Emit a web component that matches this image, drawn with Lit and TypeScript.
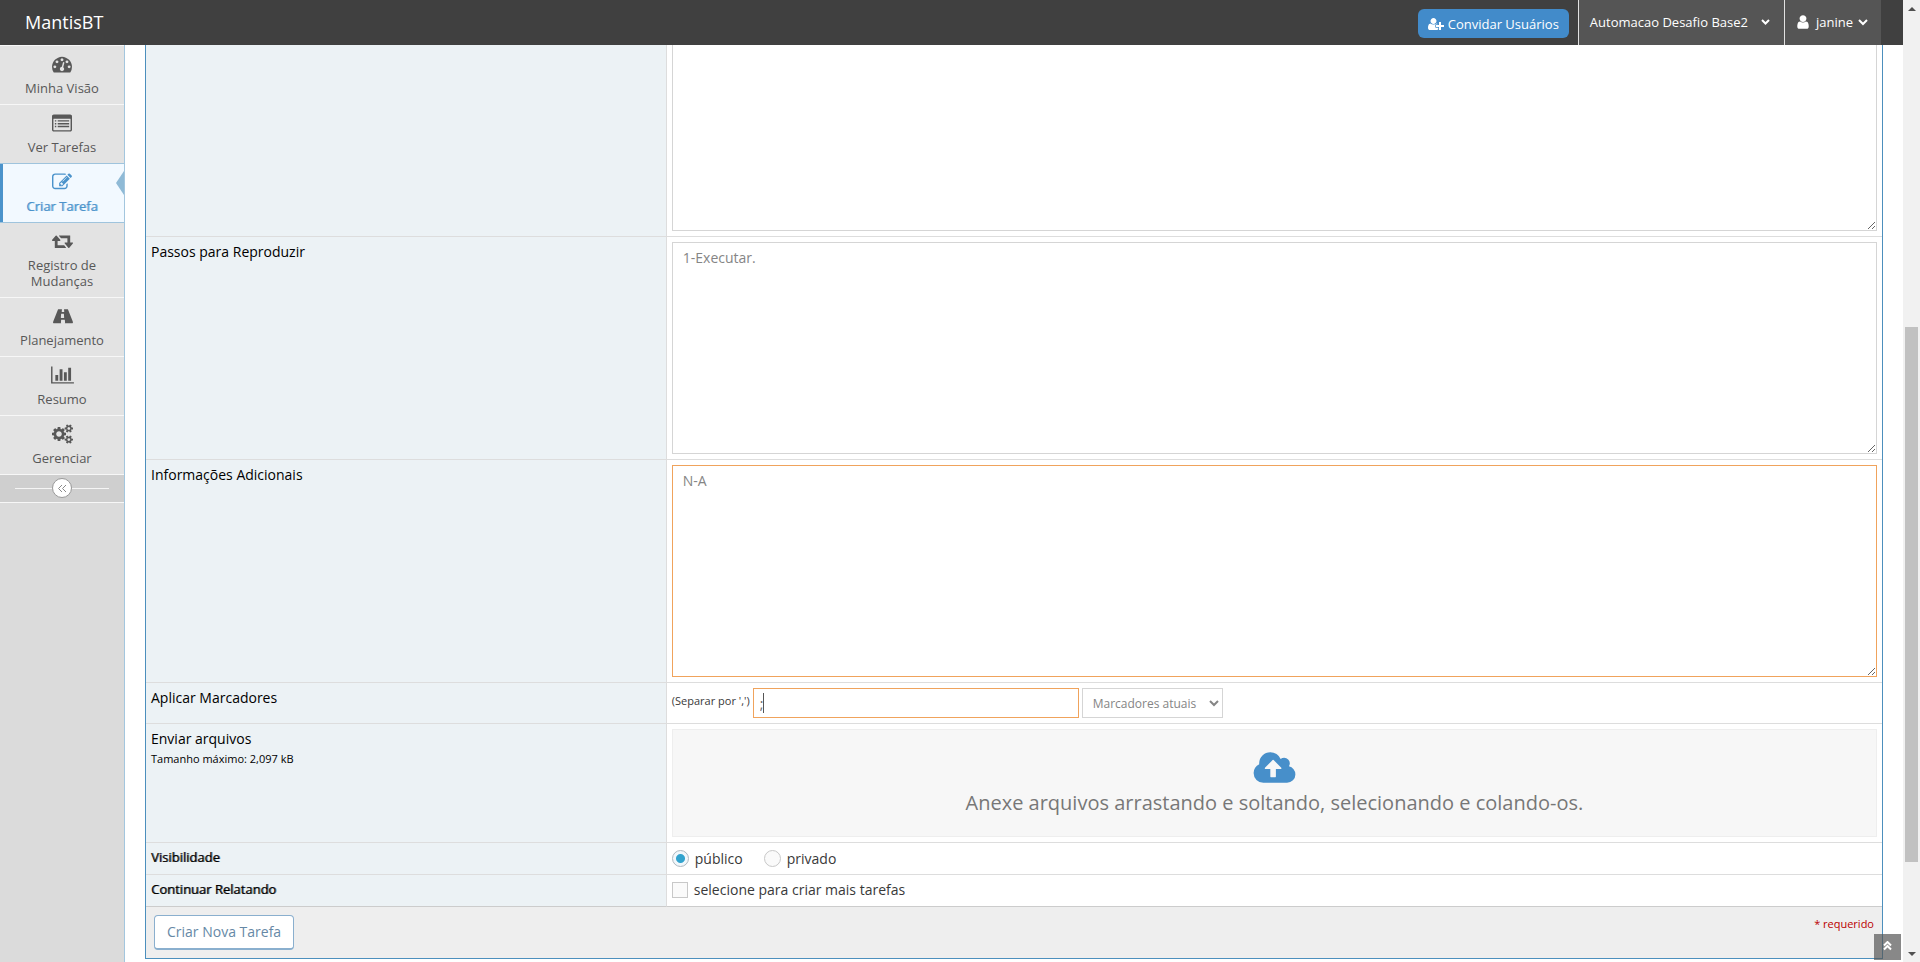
import { LitElement, html, css, svg, nothing } from "lit";
import { customElement, property } from "lit/decorators.js";

interface Glyph {
  width: number;
  path: string;
}

const cog =
  "v140q0 16-149 31-12 27-30 52 51 113 51 138 0 4-4 7-122 71-124 71-8 0-46-47t-52-68q-20 2-30 2t-30-2q-14 21-52 68t-46 47q-2 0-124-71-4-3-4-7 0-25 51-138-18-25-30-52-149-15-149-31v-140q0-16 149-31 13-29 30-52-51-113-51-138 0-4 4-7 4-2 35-20t59-34 30-16q8 0 46 46.5t52 67.5q20-2 30-2t30 2q51-71 92-112l6-2q4 0 124 70 4 3 4 7 0 25-51 138 17 23 30 52 149 15 149 31z";

const glyphs: Record<string, Glyph> = {
  dashboard: {
    width: 1792,
    path: "M384 1152q0-53-37.5-90.5t-90.5-37.5-90.5 37.5-37.5 90.5 37.5 90.5 90.5 37.5 90.5-37.5 37.5-90.5zm192-448q0-53-37.5-90.5t-90.5-37.5-90.5 37.5-37.5 90.5 37.5 90.5 90.5 37.5 90.5-37.5 37.5-90.5zm428 481l101-382q6-26-7.5-48.5t-38.5-29.5-48 6.5-30 39.5l-101 382q-60 5-107 43.5t-63 98.5q-20 77 20 146t117 89 146-20 89-117q16-60-6-117t-72-91zm660-33q0-53-37.5-90.5t-90.5-37.5-90.5 37.5-37.5 90.5 37.5 90.5 90.5 37.5 90.5-37.5 37.5-90.5zm-640-640q0-53-37.5-90.5t-90.5-37.5-90.5 37.5-37.5 90.5 37.5 90.5 90.5 37.5 90.5-37.5 37.5-90.5zm448 192q0-53-37.5-90.5t-90.5-37.5-90.5 37.5-37.5 90.5 37.5 90.5 90.5 37.5 90.5-37.5 37.5-90.5zm320 448q0 261-141 483-19 29-54 29h-1402q-35 0-54-29-141-221-141-483 0-182 71-348t191-286 286-191 348-71 348 71 286 191 191 286 71 348z",
  },
  list: {
    width: 1792,
    path: "M160 128h1472q66 0 113 47t47 113v1216q0 66-47 113t-113 47h-1472q-66 0-113-47t-47-113v-1216q0-66 47-113t113-47zm0 384q-32 0-32 32v960q0 32 32 32h1472q32 0 32-32v-960q0-32-32-32zM256 640h128v128h-128zM256 896h128v128h-128zM256 1152h128v128h-128zM512 640h1024v128h-1024zM512 896h1024v128h-1024zM512 1152h1024v128h-1024z",
  },
  edit: {
    width: 1792,
    path: "M888 1184l116-116-152-152-116 116v56h96v96h56zm440-720q-16-16-33 1l-350 350q-17 17-1 33t33-1l350-350q17-17 1-33zm80 594v190q0 119-84.5 203.5t-203.5 84.5h-832q-119 0-203.5-84.5t-84.5-203.5v-832q0-119 84.5-203.5t203.5-84.5h832q63 0 117 25 15 7 18 23 3 17-9 29l-49 49q-14 14-32 8-23-6-45-6h-832q-66 0-113 47t-47 113v832q0 66 47 113t113 47h832q66 0 113-47t47-113v-126q0-13 9-22l64-64q15-15 35-7t20 29zm-96-738l288 288-672 672h-288v-288zm444 132l-92 92-288-288 92-92q28-28 68-28t68 28l152 152q28 28 28 68t-28 68z",
  },
  retweet: {
    width: 1920,
    path: "M1280 1504q0 13-9.5 22.5t-22.5 9.5h-960q-8 0-13.5-2t-9-7-5.5-8-3-11.5-1-11.5v-600h-192q-26 0-45-19t-19-45q0-24 15-41l320-384q19-22 49-22t49 22l320 384q15 17 15 41 0 26-19 45t-45 19h-192v384h576q16 0 25 11l160 192q7 10 7 21zm640-416q0 24-15 41l-320 384q-20 23-49 23t-49-23l-320-384q-15-17-15-41 0-26 19-45t45-19h192v-384h-576q-16 0-25-12l-160-192q-7-9-7-20 0-13 9.5-22.5t22.5-9.5h960q8 0 13.5 2t9 7 5.5 8 3 11.5 1 11.5v600h192q26 0 45 19t19 45z",
  },
  road: {
    width: 1920,
    path: "M1111 1047v-4l-24-320q-1-13-11-22.5t-23-9.5h-186q-13 0-23 9.5t-11 22.5l-24 320v4q-1 12 8 20t21 8h244q12 0 21-8t8-20zm804 434q0 73-46 73h-704q13 0 22-9.5t8-22.5l-20-256q-1-13-11-22.5t-23-9.5h-272q-13 0-23 9.5t-11 22.5l-20 256q-1 13 8 22.5t22 9.5h-704q-46 0-46-73 0-54 26-116l417-1044q8-19 26-33t38-14h339q-13 0-23 9.5t-11 22.5l-15 192q-1 14 8 23t22 9h166q13 0 22-9t8-23l-15-192q-1-13-11-22.5t-23-9.5h339q20 0 38 14t26 33l417 1044q26 62 26 116z",
  },
  chart: {
    width: 2048,
    path: "M640 896v512h-256v-512h256zm384-512v1024h-256v-1024h256zm1024 1152v128h-2048v-1536h128v1408h1920zm-640-896v768h-256v-768h256zm384-384v1152h-256v-1152h256z",
  },
  cogs: {
    width: 1920,
    path:
      "M896 896q0-106-75-181t-181-75-181 75-75 181 75 181 181 75 181-75 75-181zm768 512q0-52-38-90t-90-38-90 38-38 90q0 53 37.5 90.5t90.5 37.5 90.5-37.5 37.5-90.5zm0-1024q0-52-38-90t-90-38-90 38-38 90q0 53 37.5 90.5t90.5 37.5 90.5-37.5 37.5-90.5zm-384 421v185q0 10-7 19.5t-16 10.5l-155 24q-11 35-32 76 34 48 90 115 7 11 7 20 0 12-7 19-23 30-82.5 89.5t-78.5 59.5q-11 0-21-7l-115-90q-37 19-77 31-11 108-23 155-7 24-30 24h-186q-11 0-20-7.5t-10-17.5l-23-153q-34-10-75-31l-118 89q-7 7-20 7-11 0-21-8-144-133-144-160 0-9 7-19 10-14 41-53t47-61q-23-44-35-82l-152-24q-10-1-17-9.5t-7-19.5v-185q0-10 7-19.5t16-10.5l155-24q11-35 32-76-34-48-90-115-7-11-7-20 0-12 7-20 22-30 82-89t79-59q11 0 21 7l115 90q34-18 77-32 11-108 23-154 7-24 30-24h186q11 0 20 7.5t10 17.5l23 153q34 10 75 31l118-89q8-7 20-7 11 0 21 8 144 133 144 160 0 8-7 19-12 16-42 54t-45 60q23 48 34 82l152 23q10 2 17 10.5t7 19.5zm640 533" +
      cog +
      "m0-1024" +
      cog,
  },
  user: {
    width: 1792,
    path: "M1536 1399q0 109-62.5 187t-150.5 78h-854q-88 0-150.5-78t-62.5-187q0-85 8.5-160.5t31.5-152 58.5-131 94-89 134.5-34.5q131 128 313 128t313-128q76 0 134.5 34.5t94 89 58.5 131 31.5 152 8.5 160.5zm-256-887q0 159-112.5 271.5t-271.5 112.5-271.5-112.5-112.5-271.5 112.5-271.5 271.5-112.5 271.5 112.5 112.5 271.5z",
  },
  userPlus: {
    width: 2048,
    path: "M704 896q-159 0-271.5-112.5t-112.5-271.5 112.5-271.5 271.5-112.5 271.5 112.5 112.5 271.5-112.5 271.5-271.5 112.5zm960 128h352q13 0 22.5 9.5t9.5 22.5v192q0 13-9.5 22.5t-22.5 9.5h-352v352q0 13-9.5 22.5t-22.5 9.5h-192q-13 0-22.5-9.5t-9.5-22.5v-352h-352q-13 0-22.5-9.5t-9.5-22.5v-192q0-13 9.5-22.5t22.5-9.5h352v-352q0-13 9.5-22.5t22.5-9.5h192q13 0 22.5 9.5t9.5 22.5v352zm-736 224q0 52 38 90t90 38h256v238q-68 50-171 50h-874q-121 0-194-69t-73-190q0-53 3.5-103.5t14-109 26.5-108.5 43-97.5 62-81 85.5-53.5 111.5-20q19 0 39 17 79 61 154.5 91.5t164.5 30.5 164.5-30.5 154.5-91.5q20-17 39-17 132 0 217 96h-223q-52 0-90 38t-38 90v192z",
  },
  cloud: {
    width: 2048,
    path: "M1344 928q0-14-9-23l-352-352q-9-9-23-9t-23 9l-351 351q-10 12-10 24 0 14 9 23t23 9h224v352q0 13 9.5 22.5t22.5 9.5h192q13 0 22.5-9.5t9.5-22.5v-352h224q13 0 22.5-9.5t9.5-22.5zm640 288q0 159-112.5 271.5t-271.5 112.5h-1088q-185 0-316.5-131.5t-131.5-316.5q0-130 70-240t188-165q-2-30-2-43 0-212 150-362t362-150q156 0 285.5 87t188.5 231q71-62 166-62 106 0 181 75t75 181q0 76-41 138 130 31 213.5 135.5t83.5 238.5z",
  },
};

const icon = (name: string, size: number) => {
  const g = glyphs[name];
  return html`<svg
    aria-hidden="true"
    height=${size}
    width=${Math.round((g.width * size) / 1792)}
    viewBox="0 0 ${g.width} 1792"
  >
    ${svg`<path fill="currentColor" fill-rule=${name === "list" ? "evenodd" : "nonzero"} d=${g.path} />`}
  </svg>`;
};

const strokes = (d: string, width: number, height: number, weight = 2) => html`<svg
  aria-hidden="true"
  width=${width}
  height=${height}
  viewBox="0 0 ${width} ${height}"
>
  <path d=${d} fill="none" stroke="currentColor" stroke-width=${weight} />
</svg>`;

@customElement("app-topbar")
export class AppTopbar extends LitElement {
  static styles = css`
    :host {
      display: block;
      background: #404040;
      color: #fff;
      font-size: 13px;
    }
    .bar {
      display: flex;
      height: 45px;
    }
    .brand {
      padding-left: 25px;
      margin-right: auto;
      color: #fff;
      text-decoration: none;
      font-size: 18px;
      line-height: 45px;
    }
    .invite {
      display: flex;
      align-items: center;
      gap: 4px;
      height: 29px;
      margin: 9px 9px 0 0;
      padding: 0 10px;
      border-radius: 6px;
      background: #428bca;
      color: #fff;
      text-decoration: none;
    }
    .menu {
      display: flex;
      align-items: center;
      box-sizing: border-box;
      border: 0;
      border-left: 1px solid #e1e1e1;
      background: #555;
      color: #fff;
      font: inherit;
    }
    .project {
      gap: 13px;
      padding: 0 14px 2px 11px;
    }
    .account {
      gap: 5px;
      padding: 0 13px 2px 10px;
      margin-right: 22px;
    }
  `;

  render() {
    return html`<nav class="bar">
      <a class="brand" href="#">MantisBT</a>
      <a class="invite" href="#">${icon("userPlus", 14)}<span>Convidar Usuários</span></a>
      <button class="menu project" type="button">
        <span>Automacao Desafio Base2</span>${strokes("M1 2l3.500 3.500 3.500-3.500", 9, 7)}
      </button>
      <button class="menu account" type="button">
        ${icon("user", 16)}<span>janine</span>${strokes("M1 2l4 4 4-4", 10, 8)}
      </button>
    </nav>`;
  }
}

const sections = [
  { icon: "dashboard", label: "Minha Visão" },
  { icon: "list", label: "Ver Tarefas" },
  { icon: "edit", label: "Criar Tarefa" },
  { icon: "retweet", label: "Registro de Mudanças" },
  { icon: "road", label: "Planejamento" },
  { icon: "chart", label: "Resumo" },
  { icon: "cogs", label: "Gerenciar" },
];

@customElement("app-sidebar")
export class AppSidebar extends LitElement {
  @property() current = "";

  static styles = css`
    :host {
      display: block;
      box-sizing: border-box;
      border-right: 1px solid #a3c6de;
      background: #dbdbdb;
      color: #585858;
      font-size: 13px;
      line-height: 16px;
    }
    .items {
      margin: 0;
      padding: 0;
      list-style: none;
    }
    .link {
      position: relative;
      display: flex;
      flex-direction: column;
      align-items: center;
      gap: 3px;
      padding: 5px 20px 8px;
      border-top: 1px solid #f7f7f7;
      background: #e3e3e3;
      color: inherit;
      text-align: center;
      text-decoration: none;
    }
    .glyph {
      display: flex;
      align-items: center;
      height: 26px;
    }
    .current {
      border-top-color: #9fc4dd;
      background: #f2f9ff;
      color: #4b93cb;
      box-shadow: inset 3px 0 #4b93cb;
    }
    .current .text {
      text-shadow: 1px 0 rgba(75, 147, 203, 0.6);
    }
    .current::after {
      content: "";
      position: absolute;
      right: 0;
      top: 7px;
      border: solid transparent;
      border-width: 12px 8px 12px 0;
      border-right-color: #8fbad6;
    }
    .after {
      border-top-color: #9fc4dd;
    }
    .toggle {
      display: flex;
      align-items: center;
      width: 100%;
      height: 29px;
      padding: 0 15px 1px;
      border: solid #f7f7f7;
      border-width: 1px 0;
      background: #cfcfcf;
      color: #8a8a8a;
    }
    .rule {
      flex: 1;
      height: 1px;
      background: #f5f5f5;
    }
    .knob {
      display: grid;
      place-items: center;
      width: 18px;
      height: 18px;
      border: 1px solid #999;
      border-radius: 50%;
      background: #fff;
    }
  `;

  render() {
    const active = sections.findIndex((s) => s.label === this.current);
    return html`<nav>
        <ul class="items">
          ${sections.map(
            (s, i) => html`<li>
              <a
                class="link ${i === active ? "current" : i === active + 1 ? "after" : ""}"
                href="#"
                aria-current=${i === active ? "page" : nothing}
              >
                <span class="glyph">${icon(s.icon, 20)}</span>
                <span class="text">${s.label}</span>
              </a>
            </li>`,
          )}
        </ul>
      </nav>
      <button class="toggle" type="button" aria-label="Recolher menu">
        <span class="rule"></span>
        <span class="knob">${strokes("M5 1l-3.500 3.500 3.500 3.500M9 1l-3.500 3.500 3.500 3.500", 10, 9, 1)}</span>
        <span class="rule"></span>
      </button>`;
  }
}

@customElement("report-form")
export class ReportForm extends LitElement {
  static styles = css`
    :host {
      display: block;
      border: solid #4c8fbd;
      border-width: 0 1px 1px;
      color: #393939;
      font-size: 14px;
      line-height: 20px;
    }
    .fields {
      width: 100%;
      table-layout: fixed;
      border-spacing: 0;
    }
    .labels {
      width: 30%;
    }
    th,
    td {
      padding: 5px;
      border-bottom: 1px solid #ddd;
      vertical-align: top;
    }
    th {
      border-right: 1px solid #ddd;
      background: #ecf2f5;
      color: #000;
      font-weight: 400;
      text-align: left;
    }
    .top th,
    .top td {
      padding-top: 0;
    }
    .last th,
    .last td {
      border-bottom-color: #ccc;
    }
    .strong {
      font-size: 13px;
      line-height: 18px;
      text-shadow: 1px 0 rgba(0, 0, 0, 0.6);
    }
    .hint {
      display: block;
      font-size: 11px;
    }
    .area,
    .text,
    .select {
      box-sizing: border-box;
      border: 1px solid #d5d5d5;
      border-radius: 0;
      background: #fff;
      color: #858585;
      font: inherit;
      outline: 0;
    }
    .area {
      display: block;
      width: 100%;
      height: 212px;
      padding: 5px 10px;
      resize: vertical;
    }
    .cut {
      height: 186px;
      border-top: 0;
    }
    .edited {
      border-color: #f0a35c;
    }
    .tags {
      display: flex;
      gap: 3px;
    }
    .separator {
      padding-top: 3px;
      font-size: 11px;
      line-height: 20px;
    }
    .entry {
      position: relative;
      width: 326px;
    }
    .text {
      width: 100%;
      height: 30px;
      padding: 4px 6px;
      color: #696969;
    }
    .caret {
      position: absolute;
      left: 10px;
      top: 5px;
      width: 1px;
      height: 20px;
      background: #555;
    }
    .select {
      width: 141px;
      height: 30px;
      padding: 3px 6px;
      font-size: 12px;
    }
    .drop {
      display: flex;
      flex-direction: column;
      align-items: center;
      box-sizing: border-box;
      height: 108px;
      padding-top: 18px;
      border: 1px solid #eee;
      background: #f7f7f7;
      color: #777;
      font-size: 20px;
      line-height: 30px;
    }
    .cloud {
      height: 40px;
      color: #478fca;
    }
    .choices {
      display: flex;
      gap: 21px;
    }
    .choice {
      display: flex;
      align-items: center;
      gap: 6px;
      height: 21px;
    }
    .single {
      height: 20px;
      margin-bottom: 1px;
    }
    .radio,
    .check {
      appearance: none;
      box-sizing: border-box;
      flex: none;
      margin: 0;
      border: 1px solid #c8c8c8;
      background: #fafafa;
    }
    .radio {
      width: 17px;
      height: 17px;
      border-radius: 50%;
    }
    .radio:checked {
      border-color: #adb8c0;
      background: radial-gradient(circle, #32a3ce 4px, #f1f7fb 5px);
    }
    .check {
      width: 16px;
      height: 16px;
    }
    .footer {
      display: flex;
      justify-content: space-between;
      align-items: flex-start;
      padding: 8px;
      background: #eee;
    }
    .submit {
      height: 35px;
      padding: 0 12px;
      border: 1px solid #8aafce;
      border-bottom-width: 2px;
      border-radius: 4px;
      background: #fff;
      color: #6688a6;
      font: inherit;
    }
    .required {
      color: #b00;
      font-size: 11px;
      line-height: 18px;
    }
  `;

  render() {
    return html`<form @submit=${(e: Event) => e.preventDefault()}>
      <table class="fields">
        <colgroup>
          <col class="labels" />
          <col />
        </colgroup>
        <tbody>
          <tr class="top">
            <th scope="row"></th>
            <td><textarea class="area cut" aria-label="Descrição"></textarea></td>
          </tr>
          <tr>
            <th scope="row"><label for="steps">Passos para Reproduzir</label></th>
            <td><textarea class="area" id="steps" .value=${"1-Executar."}></textarea></td>
          </tr>
          <tr>
            <th scope="row"><label for="info">Informações Adicionais</label></th>
            <td><textarea class="area edited" id="info" .value=${"N-A"}></textarea></td>
          </tr>
          <tr>
            <th scope="row"><label for="tag">Aplicar Marcadores</label></th>
            <td>
              <div class="tags">
                <span class="separator">(Separar por ',')</span>
                <span class="entry">
                  <input class="text edited" id="tag" type="text" .value=${";"} />
                  <span class="caret"></span>
                </span>
                <select class="select" aria-label="Marcadores atuais">
                  <option>Marcadores atuais</option>
                </select>
              </div>
            </td>
          </tr>
          <tr>
            <th scope="row">Enviar arquivos<span class="hint">Tamanho máximo: 2,097 kB</span></th>
            <td>
              <div class="drop">
                <span class="cloud">${icon("cloud", 39)}</span>
                <span>Anexe arquivos arrastando e soltando, selecionando e colando-os.</span>
              </div>
            </td>
          </tr>
          <tr>
            <th scope="row" class="strong">Visibilidade</th>
            <td>
              <div class="choices">
                <label class="choice"><input class="radio" type="radio" name="view" checked />público</label>
                <label class="choice"><input class="radio" type="radio" name="view" />privado</label>
              </div>
            </td>
          </tr>
          <tr class="last">
            <th scope="row" class="strong"><label for="more">Continuar Relatando</label></th>
            <td>
              <label class="choice single"
                ><input class="check" id="more" type="checkbox" />selecione para criar mais tarefas</label
              >
            </td>
          </tr>
        </tbody>
      </table>
      <div class="footer">
        <button class="submit" type="submit">Criar Nova Tarefa</button>
        <span class="required">* requerido</span>
      </div>
    </form>`;
  }
}

@customElement("app-root")
export class AppRoot extends LitElement {
  static styles = css`
    :host {
      display: grid;
      grid-template-columns: minmax(0, 1fr) 17px;
      height: 100vh;
      overflow: hidden;
      background: #fff;
      font-family: "Open Sans", sans-serif;
    }
    .page {
      position: relative;
      display: flex;
      flex-direction: column;
      min-height: 0;
    }
    .body {
      display: grid;
      grid-template-columns: 125px minmax(0, 1fr);
      flex: 1;
      min-height: 0;
    }
    .content {
      padding: 0 20px;
    }
    .up {
      position: absolute;
      right: 2px;
      bottom: 2px;
      display: grid;
      place-items: center;
      width: 27px;
      height: 26px;
      padding: 0 0 2px;
      border: 0;
      background: rgba(85, 85, 85, 0.7);
      color: #fff;
    }
    .scroll {
      display: flex;
      flex-direction: column;
      align-items: center;
      background: #f1f1f1;
      color: #505050;
    }
    .arrow {
      display: grid;
      place-items: center;
      height: 17px;
    }
    .before {
      flex: 310;
    }
    .thumb {
      flex: 535;
      width: 13px;
      background: #c1c1c1;
    }
    .rest {
      flex: 83;
    }
  `;

  render() {
    const arrow = (points: string) =>
      html`<span class="arrow"
        ><svg width="8" height="4" viewBox="0 0 8 4"><polygon points=${points} fill="currentColor" /></svg
      ></span>`;
    return html`<div class="page">
        <app-topbar></app-topbar>
        <div class="body">
          <app-sidebar current="Criar Tarefa"></app-sidebar>
          <main class="content"><report-form></report-form></main>
        </div>
        <button class="up" type="button" aria-label="Voltar ao topo">
          ${strokes("M1 4.500l3.500-3.500 3.500 3.500M1 8.500l3.500-3.500 3.500 3.500", 9, 10)}
        </button>
      </div>
      <div class="scroll" aria-hidden="true">
        ${arrow("0,4 4,0 8,4")}
        <span class="before"></span><span class="thumb"></span><span class="rest"></span>
        ${arrow("0,0 8,0 4,4")}
      </div>`;
  }
}
